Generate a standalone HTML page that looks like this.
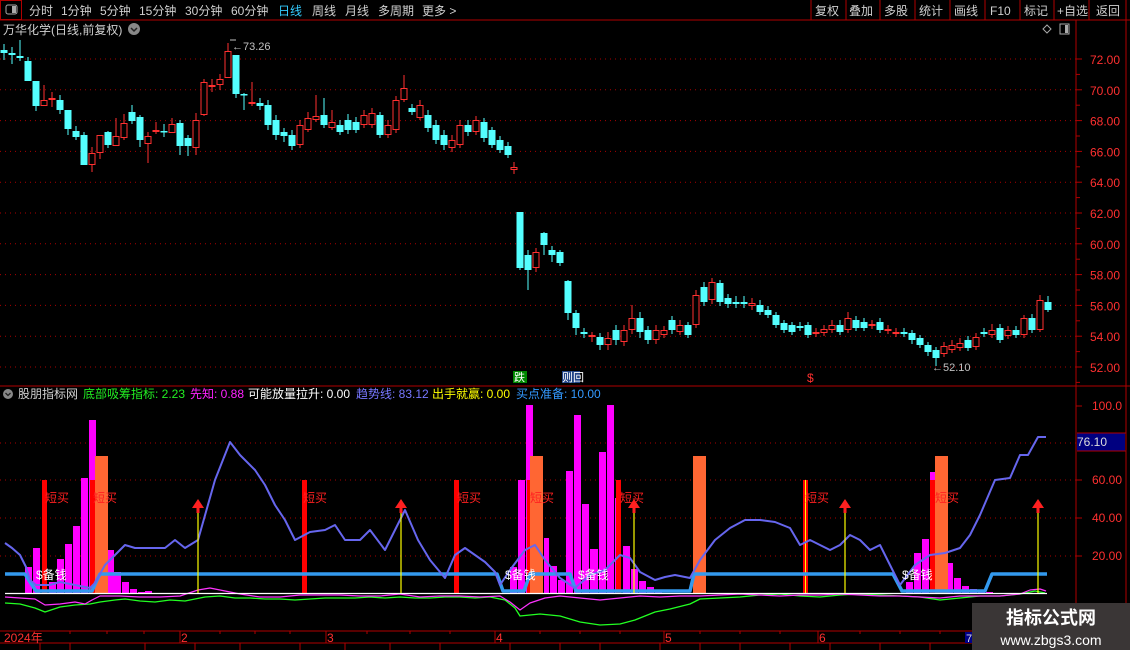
<!DOCTYPE html>
<html><head><meta charset="utf-8"><style>
html,body{margin:0;padding:0;background:#000;width:1130px;height:650px;overflow:hidden}
svg{display:block}
text{font-family:"Liberation Sans","Noto Sans CJK SC",sans-serif}
</style></head><body>
<svg id="s" width="1130" height="650" xmlns="http://www.w3.org/2000/svg"></svg>
<script>
var o=[];
function R(x,y,w,h,c,extra){o.push('<rect x="'+x+'" y="'+y+'" width="'+w+'" height="'+h+'" fill="'+c+'" '+(extra||'')+'/>');}
function L(x1,y1,x2,y2,c,w,extra){o.push('<line x1="'+x1+'" y1="'+y1+'" x2="'+x2+'" y2="'+y2+'" stroke="'+c+'" stroke-width="'+(w||1)+'" '+(extra||'')+'/>');}
function T(x,y,s,c,fs,extra){o.push('<text x="'+x+'" y="'+y+'" fill="'+c+'" font-size="'+(fs||12)+'" '+(extra||'')+'>'+s+'</text>');}
function P(pts,c,w){o.push('<polyline points="'+pts+'" fill="none" stroke="'+c+'" stroke-width="'+w+'" stroke-linejoin="round"/>');}
L(0,20,1130,20,'#b00000',1);
R(0.5,0.5,21,19,'none','stroke="#b00000"');
R(6,5,11,9,'none','stroke="#aaa" rx="2"');R(12,6,4,7,'#aaa');
var tb=[['分时',29],['1分钟',61],['5分钟',100],['15分钟',139],['30分钟',185],['60分钟',231],['日线',278],['周线',312],['月线',345],['多周期',378],['更多 >',422]];
tb.forEach(function(a){T(a[1],15,a[0],a[0]=='日线'?'#33ccff':'#d0d0d0',12);});
var rb=[['复权',815],['叠加',849],['多股',884],['统计',919],['画线',954],['F10',990],['标记',1024],['+自选',1057],['返回',1096]];
[811,846,880,915,950,985,1020,1054,1089,1126].forEach(function(x){L(x,0,x,20,'#b00000',1);});
rb.forEach(function(a){T(a[1],15,a[0],'#d0d0d0',12);});
T(3,34,'万华化学(日线,前复权)','#d0d0d0',12);
o.push('<circle cx="134" cy="29" r="6" fill="#888"/><path d="M131 28 l3 3 l3 -3" stroke="#222" stroke-width="1.5" fill="none"/>');
o.push('<path d="M1047 25 l4 4 l-4 4 l-4 -4z" fill="none" stroke="#aaa"/>');R(1060,24,9,10,'none','stroke="#aaa"');R(1065,25,3,8,'#aaa');
L(1076,20,1076,631,'#b00000',1);L(1126,20,1126,650,'#b00000',1);
L(0,386,1130,386,'#b00000',1);
L(0,631,1130,631,'#b00000',1);L(0,643,1130,643,'#b00000',1);
var pl=['72.00','70.00','68.00','66.00','64.00','62.00','60.00','58.00','56.00','54.00','52.00'];
for(var i=0;i<11;i++){var y=59+i*30.8;L(0,y,1076,y,'#aa0000',1,'stroke-dasharray="1,4"');L(1076,y,1082,y,'#b00000',1);L(1076,y+15.4,1080,y+15.4,'#b00000',1);T(1090,y+5,pl[i],'#ff3030',12);}
var cd="4,50,53,c,44,60;12,53,55,c,47,64;20,56,58,c,40,61;28,61,81,c,57,81;36,81,106,c,81,111;44,100,106,r,85,106;52,98,100,r,92,107;60,100,110,c,95,114;68,110,129,c,110,135;76,131,137,c,126,140;84,135,165,c,132,165;92,153,165,r,147,172;100,135,153,r,135,159;108,132,145,c,131,148;116,136,146,r,118,146;124,123,138,r,114,140;132,112,121,c,105,124;140,117,140,c,115,147;148,136,144,r,132,163;156,130,132,r,122,134;164,131,132,c,124,137;172,124,133,r,118,133;180,123,146,c,120,155;188,138,146,c,135,156;196,120,148,r,113,155;204,82,115,r,79,116;212,85,87,r,79,92;220,79,85,r,74,90;228,51,78,r,43,78;236,55,94,c,55,98;244,94,95,c,93,110;252,102,104,r,82,106;260,103,106,c,98,110;268,105,125,c,100,130;276,120,135,c,115,140;284,132,136,c,128,142;292,135,146,c,130,150;300,125,145,r,120,148;308,118,130,r,112,132;316,116,120,r,95,122;324,115,125,c,98,128;332,122,128,r,110,130;340,125,132,c,120,135;348,120,130,c,114,134;356,122,130,c,117,133;364,115,125,r,110,128;372,113,125,r,108,128;380,115,135,c,112,138;388,125,135,r,120,138;396,100,130,r,96,133;404,88,100,r,75,102;412,108,112,c,104,115;420,105,118,r,100,120;428,115,128,c,110,132;436,125,140,c,120,144;444,135,145,c,130,150;452,140,148,r,135,152;460,125,145,r,120,148;468,125,132,c,120,136;476,120,132,r,116,135;484,122,138,c,118,142;492,130,145,c,127,148;500,140,150,c,136,153;508,146,155,c,142,158;514,167,170,r,162,174;520,212,268,c,212,270;528,255,270,c,250,290;536,252,268,r,248,272;544,233,245,c,232,255;552,250,255,c,246,262;560,252,263,c,250,266;568,281,313,c,280,320;576,313,328,c,310,335;584,332,334,c,328,338;592,335,337,r,332,342;600,337,345,c,333,350;608,338,345,r,332,350;616,330,340,c,325,345;624,330,342,r,325,346;632,318,330,r,305,334;640,318,332,c,312,338;648,330,340,c,326,344;656,330,340,r,325,344;664,330,335,r,326,338;672,320,330,c,316,334;680,325,332,r,320,335;688,325,335,c,322,338;696,295,325,r,290,328;704,287,302,c,282,306;712,282,300,r,278,304;720,283,302,c,280,306;728,298,304,c,294,308;736,302,304,c,296,308;744,302,304,c,296,308;752,303,306,r,298,310;760,305,312,c,300,315;768,310,315,c,306,318;776,315,325,c,312,328;784,323,330,c,320,333;792,325,332,c,322,335;800,326,328,c,322,331;808,325,335,c,322,338;816,332,334,r,328,337;824,329,333,r,325,336;832,325,330,r,320,333;840,325,332,c,320,335;848,318,330,r,312,333;856,320,328,c,316,331;864,322,328,c,318,331;872,324,326,r,320,329;880,322,330,c,318,333;888,329,331,r,325,334;896,332,334,r,328,337;904,332,334,c,328,337;912,333,340,c,330,344;920,338,345,c,335,348;928,345,352,c,342,356;936,350,358,c,347,366;944,346,354,r,342,357;952,345,350,r,340,353;960,343,348,r,338,351;968,340,348,c,336,351;976,337,347,r,333,350;984,332,334,c,328,337;992,330,335,r,324,338;1000,328,340,c,324,343;1008,330,336,r,326,339;1016,330,335,c,326,338;1024,318,335,r,315,338;1032,318,330,c,314,333;1040,300,330,r,295,332;1048,302,310,c,296,312";
cd.split(';').forEach(function(s){var a=s.split(',');var x=+a[0],t=+a[1],b=+a[2],h=+a[4],l=+a[5];var col=a[3]=='c'?'#54ffff':'#ff3030';
L(x,h,x,l,col,1);
if(a[3]=='c'){R(x-3.5,t,7,Math.max(b-t,1.5),col);}else{if(b-t<3){R(x-3.5,t,7,2,col);}else R(x-3,t+0.5,6,b-t-1,'#000','stroke="'+col+'" stroke-width="1"');}
});
T(232,50,'←73.26','#c0c0c0',11);L(230,40,236,40,'#c0c0c0',1);
T(932,371,'←52.10','#c0c0c0',11);
R(513,371,14,12,'#008800');T(514,381,'跌','#fff',11);
R(562,371,18,12,'#224488');T(562,381,'则回','#fff',11);
T(807,382,'$','#ff3030',12);
o.push('<circle cx="8" cy="394" r="5" fill="#888"/><path d="M5.5 393 l2.5 2.5 l2.5 -2.5" stroke="#222" stroke-width="1.3" fill="none"/>');
var lg=[['股朋指标网',18,'#d0d0d0'],['底部吸筹指标: 2.23',83,'#22ee22'],['先知: 0.88',190,'#ff22ff'],['可能放量拉升: 0.00',248,'#ffffff'],['趋势线: 83.12',356,'#7777ff'],['出手就赢: 0.00',432,'#ffff00'],['买点准备: 10.00',516,'#3399ff']];
lg.forEach(function(a){T(a[1],398,a[0],a[2],12);});
[443,480,518,556].forEach(function(y){L(0,y,1076,y,'#aa0000',1,'stroke-dasharray="1,4"');});
[['100.0',410],['60.00',484],['40.00',522],['20.00',560]].forEach(function(a){T(1092,a[1],a[0],'#ff3030',12);L(1076,a[1]-4,1082,a[1]-4,'#b00000',1);});
R(1077,433,48,18,'#000080');L(1077,433,1126,433,'#b00000',1);L(1077,451,1126,451,'#b00000',1);T(1077,446,'76.10','#dddddd',12);
var mb=[[25,7,567],[33,7,548],[49,7,582],[57,7,559],[65,7,544],[73,7,526],[81,7,478],[89,7,420],[108,6,550],[114,7,572],[122,7,582],[130,7,589],[138,7,592],[145,7,591],[510,7,567],[518,7,480],[526,7,405],[544,5,538],[550,7,566],[558,7,580],[566,7,471],[574,7,415],[582,7,504],[590,8,549],[599,7,452],[607,7,405],[615,6,498],[623,7,546],[631,7,569],[639,7,581],[647,7,587],[655,7,590],[906,7,582],[914,7,553],[922,7,539],[930,5,472],[948,5,563],[954,7,578],[962,7,586],[970,7,589],[978,7,591],[986,7,592]];
mb.forEach(function(b){R(b[0],b[2],b[1],593-b[2],'#ff00ff');});
[42,90,302,454,527,616,803,930].forEach(function(x){R(x,480,5,113,'#ff0000');});
L(805.5,480,805.5,593,'#ffff00',1);
[95,530,693,935].forEach(function(x){R(x,456,13,137,'#ff6633');});
P("5,603 20,604 35,608 45,612 60,607 75,605 90,604 100,602 115,600 125,599 140,601 155,602 170,600 185,601 195,599 205,597 220,596 235,598 250,598 265,599 280,599 295,600 310,599 325,598 340,598 355,598 370,597 385,598 400,597 415,598 430,598 445,597 460,597 475,598 490,597 505,600 515,608 520,616 540,614 560,616 580,622 600,625 620,624 635,620 655,612 670,609 690,604 700,599 720,598 740,597 760,595 780,594 800,596 820,597 840,595 860,594 880,595 900,596 920,597 940,600 960,598 980,596 1000,596 1020,594 1035,591 1045,593","#22ff22",1.3);
P("5,597 20,598 35,599 45,605 60,604 75,602 85,604 92,600 100,596 120,596 140,597 160,597 180,596 198,590 210,588 225,591 240,594 260,597 280,597 300,595 320,595 340,595 360,596 380,596 400,594 420,597 440,596 460,596 480,597 500,596 510,602 520,610 530,603 545,598 560,596 580,598 600,600 620,598 640,596 660,597 680,596 700,596 720,595 740,594 760,595 780,596 800,595 820,595 840,594 860,595 880,596 900,596 920,597 940,598 960,596 980,596 1000,596 1020,594 1030,590 1040,589 1046,591","#ff33ff",1.2);
L(5,593.5,1047,593.5,'#ffffff',1.3);
P("5,574 25,574 30,582 36,591 92,591 96,582 100,574 497,574 503,591 524,591 530,574 570,574 576,591 690,591 694,574 893,574 902,591 985,591 992,574 1047,574","#3399ee",3.5);
P("5,543 12,548 20,555 26,567 30,580 36,585 50,585 60,582 75,585 90,588 95,583 105,565 115,555 125,545 135,548 150,548 165,548 175,540 185,548 198,540 215,480 230,442 240,455 255,470 265,485 275,505 285,520 295,540 310,532 325,530 335,525 345,540 360,540 370,530 385,550 395,530 405,510 418,540 430,560 445,578 455,555 465,548 475,555 485,562 495,572 500,585 510,570 525,550 535,545 545,560 560,578 575,588 590,575 605,570 620,555 630,558 640,572 655,580 665,577 675,575 690,578 700,560 715,540 730,528 745,520 760,520 775,522 790,528 800,545 810,540 820,545 830,550 840,545 850,535 860,540 870,550 880,545 890,565 900,585 915,565 930,555 945,553 960,548 970,535 980,515 995,480 1010,478 1020,455 1028,455 1038,437 1046,437","#6666ee",2);
[198,401,634,845,1038].forEach(function(x){L(x,500,x,593,'#ffff00',1.2);o.push('<path d="M'+(x-6)+' 508 L'+x+' 499 L'+(x+6)+' 508 Z" fill="#ff2020"/>');R(x-1.5,507,3,6,'#ff2020');});
[[36,579],[505,579],[578,579],[902,579]].forEach(function(a){T(a[0],a[1],'$备钱','#ffffff',12);});
[[45,502],[93,502],[303,502],[457,502],[530,502],[620,502],[805,502],[935,502]].forEach(function(a){T(a[0],a[1],'短买','#ff2020',12);});
T(4,642,'2024年','#ff3030',12);T(181,642,'2','#ff3030',12);T(327,642,'3','#ff3030',12);T(496,642,'4','#ff3030',12);T(665,642,'5','#ff3030',12);T(819,642,'6','#ff3030',12);
[180,326,495,664,818].forEach(function(x){L(x,631,x,643,'#b00000',1);});
[70,107,144,220,255,290,367,410,450,540,580,620,700,740,780,860,900,940].forEach(function(x){L(x,631,x,634,'#b00000',1);});
R(965,632,8,11,'#000088');T(966,642,'7','#ddd',11);
[40,70,145,195,240,300,345,390,440,510,560,600,660,700,740,790,830,880,930].forEach(function(x){L(x,643,x,650,'#b00000',1);});
R(972,603,158,47,'#3a3636');
T(1051,624,'指标公式网','#ffffff',18,'font-weight="bold" text-anchor="middle"');
T(1051,645,'www.zbgs3.com','#ffffff',14,'text-anchor="middle"');
document.getElementById('s').innerHTML=o.join('');
</script>
</body></html>
